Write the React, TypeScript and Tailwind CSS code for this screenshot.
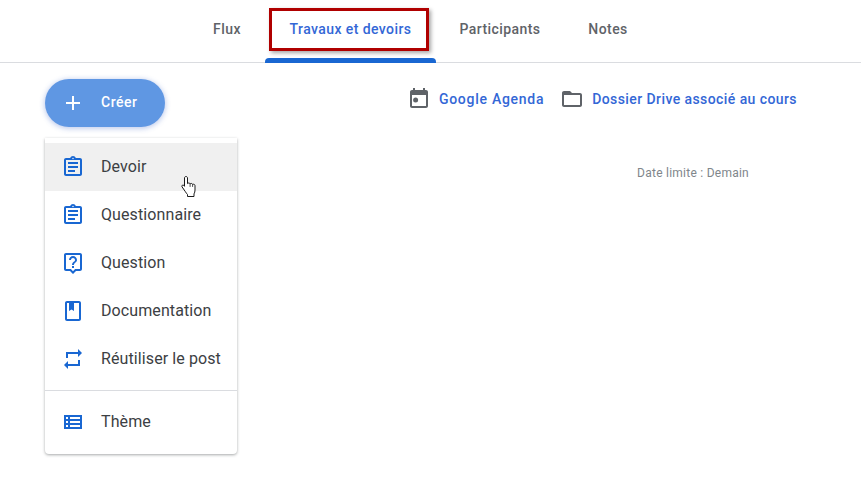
import React from "react";

const ASSIGN =
  "M7 15h7v2H7zm0-4h10v2H7zm0-4h10v2H7zm12-4h-4.18C14.4 1.84 13.3 1 12 1s-2.4.84-2.82 2H5c-1.1 0-2 .9-2 2v14c0 1.1.9 2 2 2h14c1.1 0 2-.9 2-2V5c0-1.1-.9-2-2-2zm-7-.25c.41 0 .75.34.75.75s-.34.75-.75.75-.75-.34-.75-.75.34-.75.75-.75zM19 19H5V5h14v14z";
const HELP =
  "M19 2H5c-1.11 0-2 .9-2 2v14c0 1.1.89 2 2 2h4l3 3 3-3h4c1.1 0 2-.9 2-2V4c0-1.1-.9-2-2-2zm0 16h-4.83l-.59.59L12 20.17l-1.59-1.59-.58-.58H5V4h14v14zm-8-3h2v2h-2zm1-8c1.1 0 2 .9 2 2 0 2-3 1.75-3 5h2c0-2.25 3-2.5 3-5 0-2.21-1.79-4-4-4S8 6.79 8 9h2c0-1.1.9-2 2-2z";
const BOOK =
  "M18 2H6c-1.1 0-2 .9-2 2v16c0 1.1.9 2 2 2h12c1.1 0 2-.9 2-2V4c0-1.1-.9-2-2-2zm0 18H6V4h2v8l2.5-1.5L13 12V4h5v16z";
const REPEAT = "M7 7h10v3l4-4-4-4v3H5v6h2V7zm10 10H7v-3l-4 4 4 4v-3h12v-6h-2v4z";
const TOPIC =
  "M3 5v14h18V5H3zm4 12H5v-2h2v2zm0-4H5v-2h2v2zm0-4H5V7h2v2zm12 8H9v-2h10v2zm0-4H9v-2h10v2zm0-4H9V7h10v2z";

const Icon = ({ d, className }: { d: string; className: string }) => (
  <svg viewBox="0 0 24 24" className={className} fill="currentColor">
    <path d={d} />
  </svg>
);

const items = [
  { label: "Devoir", d: ASSIGN, active: true },
  { label: "Questionnaire", d: ASSIGN },
  { label: "Question", d: HELP },
  { label: "Documentation", d: BOOK },
  { label: "Réutiliser le post", d: REPEAT },
];

const MenuRow = ({ label, d, active }: { label: string; d: string; active?: boolean }) => (
  <div className={`flex items-center h-12 pl-4 ${active ? "bg-[#f0f0f0]" : ""}`}>
    <Icon d={d} className="w-6 h-6 text-[#1967d2]" />
    <span className="ml-4 text-[16px] text-[#3c4043] tracking-[0.1px]">{label}</span>
  </div>
);

export default function App() {
  return (
    <div className="relative w-[861px] h-[484px] overflow-hidden bg-white font-['Roboto',sans-serif]">
      <div className="relative flex h-[63px] border-b border-[#dadce0] pl-[189px] text-[14px] font-medium tracking-[0.42px] text-[#5f6368]">
        <div className="w-[76px] flex items-center justify-center pb-[4px]">Flux</div>
        <div className="relative w-[171px] flex items-center justify-center pb-[4px] text-[#3367d6]">
          Travaux et devoirs
          <div className="absolute left-0 right-0 bottom-[-1px] h-[5px] rounded-t-[4px] bg-[#1967d2]" />
          <div className="absolute left-[4px] top-[8px] w-[160px] h-[43px] border-[3px] border-[#b00000] shadow-[2px_2px_4px_rgba(0,0,0,0.35)]" />
        </div>
        <div className="w-[128px] flex items-center justify-center pb-[4px]">Participants</div>
        <div className="w-[88px] flex items-center justify-center pb-[4px]">Notes</div>
      </div>

      <div className="flex pl-[45px] pt-4">
        <div className="w-[192px]">
          <button className="flex items-center w-[120px] h-12 rounded-full bg-[#5f97e3] pl-[16px] pb-[1px] text-white shadow-[0_1px_5px_1px_rgba(60,100,200,0.3)]">
            <Icon d="M19 13h-6v6h-2v-6H5v-2h6V5h2v6h6v2z" className="w-6 h-6" />
            <span className="ml-4 text-[14px] font-medium tracking-[0.5px]">Créer</span>
          </button>
          <div className="mt-[11px] pt-[5px] pb-[8px] rounded-b-[4px] bg-white shadow-[0_1px_3px_rgba(60,64,67,0.45)]">
            {items.map((item) => (
              <MenuRow key={item.label} label={item.label} d={item.d} active={item.active} />
            ))}
            <div className="my-[7px] border-t border-[#dadce0]" />
            <MenuRow label="Thème" d={TOPIC} />
          </div>
        </div>

        <div className="flex-1">
          <div className="flex items-center justify-end h-10 pr-[64px] text-[14px] font-medium text-[#3367d6]">
            <svg viewBox="0 0 24 24" className="w-6 h-6 text-[#5f6368]" fill="currentColor">
              <path d="M16 1v2H8V1H6v2H5c-1.11 0-1.99.9-1.99 2L3 19c0 1.1.89 2 2 2h14c1.1 0 2-.9 2-2V5c0-1.1-.9-2-2-2h-1V1h-2zm3 18H5V8h14v11z" />
              <circle cx="8.6" cy="13" r="2.5" />
            </svg>
            <span className="ml-2 tracking-[0.72px]">Google Agenda</span>
            <Icon
              d="M20 6h-8l-2-2H4c-1.1 0-1.99.9-1.99 2L2 18c0 1.1.9 2 2 2h16c1.1 0 2-.9 2-2V8c0-1.1-.9-2-2-2zm0 12H4V8h16v10z"
              className="w-6 h-6 ml-[16px] text-[#5f6368]"
            />
            <span className="ml-2 tracking-[0.42px]">Dossier Drive associé au cours</span>
          </div>
          <div className="mt-[45px] pr-[112px] text-right text-[12px] tracking-[0.25px] text-[#80868b]">
            Date limite : Demain
          </div>
        </div>
      </div>

      <svg viewBox="0 0 17 23" className="absolute left-[181px] top-[175px] w-[17px] h-[23px]">
        <path
          d="M5 1.500c.8 0 1.500.6 1.500 1.500v5.600c.9-1 2.300-.7 2.600.3.800-.8 2.200-.5 2.500.5 1-.5 2.400 0 2.400 1.200v4.400c0 1.500-.3 2.800-1 3.900v2.600H6.500v-2c-.7-.7-1.500-1.800-2.100-2.800L1 11.800c-.7-1.200.9-2.500 1.900-1.300l.6.8V3c0-.9.700-1.500 1.500-1.500z"
          fill="#fff"
          stroke="#1a1a1a"
          strokeWidth="1"
          strokeLinejoin="round"
        />
        <path d="M9.100 8.900v3M11.600 9.400v2.500" fill="none" stroke="#1a1a1a" strokeWidth="0.8" />
      </svg>
    </div>
  );
}
